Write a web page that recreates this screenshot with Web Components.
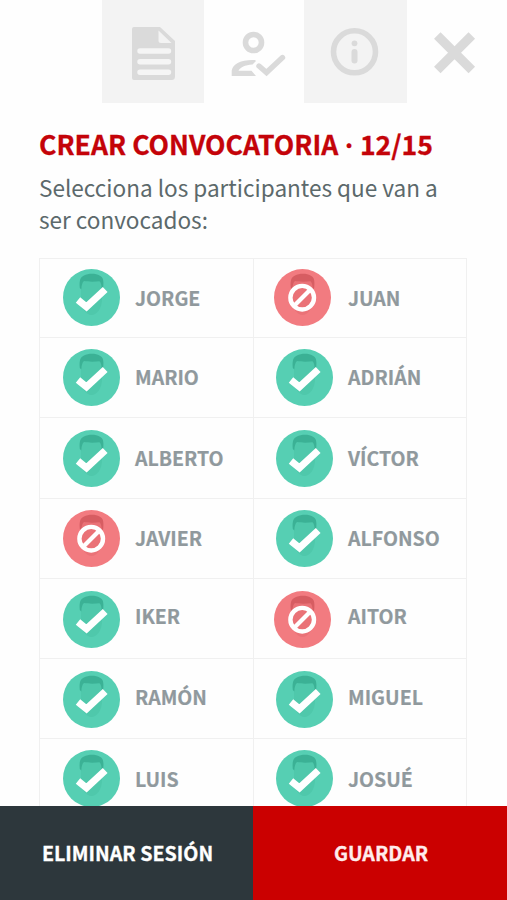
<!DOCTYPE html>
<html lang="es">
<head>
<meta charset="utf-8">
<title>Crear convocatoria</title>
<style>
  html, body {
    margin: 0;
    height: 100%;
    overflow: hidden;
  }
  body {
    background: #fefefe;
    font-family: "Noto Sans CJK SC", "Noto Sans CJK JP", sans-serif;
  }
  .dot {
    padding: 0 1px;
    font-family: "Open Sans", sans-serif;
  }
</style>
</head>
<body>
<session-screen>
  <tool-bar slot="tools">
    <tool-tab icon="doc" filled></tool-tab>
    <tool-tab icon="people"></tool-tab>
    <tool-tab icon="info" filled></tool-tab>
    <tool-tab icon="close"></tool-tab>
  </tool-bar>
  <session-heading>
    <span slot="title">CREAR CONVOCATORIA <span class="dot">·</span> 12/15</span>
    <span slot="text">Selecciona los participantes que van a<br>ser convocados:</span>
  </session-heading>
  <player-grid>
    <player-cell class="first">JORGE</player-cell>
    <player-cell class="first" state="out">JUAN</player-cell>
    <player-cell class="high">MARIO</player-cell>
    <player-cell class="high">ADRIÁN</player-cell>
    <player-cell>ALBERTO</player-cell>
    <player-cell>VÍCTOR</player-cell>
    <player-cell class="high" state="out">JAVIER</player-cell>
    <player-cell class="high">ALFONSO</player-cell>
    <player-cell class="raised">IKER</player-cell>
    <player-cell class="raised" state="out">AITOR</player-cell>
    <player-cell class="lowered">RAMÓN</player-cell>
    <player-cell class="lowered">MIGUEL</player-cell>
    <player-cell>LUIS</player-cell>
    <player-cell>JOSUÉ</player-cell>
  </player-grid>
  <action-button slot="actions" kind="dark">ELIMINAR SESIÓN</action-button>
  <action-button slot="actions" kind="primary">GUARDAR</action-button>
</session-screen>

<script>
  const icons = {
    doc: `
      <path fill-rule="evenodd" d="M32 27H58L73 41V76.500Q73 80 69.500 80H32Q30 80 30 78V29Q30 27 32 27ZM56.500 30.500V40.500Q56.500 43 59 43H69.500Z"/>
      <path class="line" d="M38 51H66.500M38 61.700H66.500M38 72.300H66.500"/>`,
    people: `
      <circle class="stroke" cx="49.500" cy="42.500" r="8" stroke-width="5.600"/>
      <path fill-rule="evenodd" d="M27.700 76V70.500C29 63 38.500 59.300 51 60L52 61L48.500 64.500C41 65 36 67.500 34.500 70.700H47.500L52 76Z"/>
      <path class="stroke" stroke-width="5.400" d="M55 66L62.500 72.500L78.500 57.500" stroke-linecap="round"/>`,
    info: `
      <circle class="stroke" cx="50.500" cy="51.800" r="21" stroke-width="5.600"/>
      <circle cx="50.500" cy="43.300" r="2.900"/>
      <path class="stroke" stroke-width="6" stroke-linecap="round" d="M50.500 52V60.500"/>`,
    close: `<path class="stroke" stroke-width="9.200" d="M30.300 35.500L64.800 70M64.800 35.500L30.300 70"/>`
  };

  const marks = {
    in: '<path d="M15 31L23.500 37.900L42.200 20.500" stroke-width="7"/>',
    out: '<circle cx="28.200" cy="28.700" r="11.800" stroke-width="4.400"/><path d="M20.200 36.700L36.200 20.700" stroke-width="4.200"/>'
  };

  class SessionScreen extends HTMLElement {
    constructor() {
      super();
      this.attachShadow({ mode: 'open' }).innerHTML = `
        <style>
          :host {
            display: flex;
            flex-direction: column;
            height: 100vh;
            overflow: hidden;
          }
          main {
            flex: 1;
            min-height: 0;
            overflow: hidden;
            padding: 0 40px 0 39px;
          }
          footer {
            display: grid;
            grid-template-columns: 253px 1fr;
            height: 94px;
            flex: none;
          }
        </style>
        <slot name="tools"></slot>
        <main><slot></slot></main>
        <footer><slot name="actions"></slot></footer>
      `;
    }
  }

  class ToolBar extends HTMLElement {
    constructor() {
      super();
      this.attachShadow({ mode: 'open' }).innerHTML = `
        <style>
          :host {
            display: grid;
            grid-template-columns: 102px 99.500px 103px 100.500px;
            justify-content: end;
            height: 103px;
            flex: none;
          }
        </style>
        <slot></slot>
      `;
    }
  }

  class ToolTab extends HTMLElement {
    constructor() {
      super();
      this.attachShadow({ mode: 'open' }).innerHTML = `
        <style>
          :host {
            display: block;
            color: #dadada;
          }
          :host([filled]) {
            background: #f3f3f3;
          }
          svg {
            display: block;
            width: 100px;
            height: 103px;
            fill: currentColor;
          }
          .stroke {
            fill: none;
            stroke: currentColor;
          }
          .line {
            fill: none;
            stroke: #f5f5f5;
            stroke-width: 5.4;
            stroke-linecap: round;
          }
        </style>
        <svg viewBox="0 0 100 103" aria-hidden="true">${icons[this.getAttribute('icon')]}</svg>
      `;
    }
  }

  class SessionHeading extends HTMLElement {
    constructor() {
      super();
      this.attachShadow({ mode: 'open' }).innerHTML = `
        <style>
          :host {
            display: block;
            height: 155px;
            white-space: nowrap;
          }
          h1 {
            margin: 0;
            padding-top: 25px;
            color: #c40309;
            font-size: 26.6px;
            font-weight: 700;
            line-height: 32px;
            -webkit-text-stroke: 0.3px;
          }
          p {
            margin: 0;
            padding-top: 11px;
            color: #5c696b;
            font-size: 22.55px;
            line-height: 31.5px;
          }
        </style>
        <h1><slot name="title"></slot></h1>
        <p><slot name="text"></slot></p>
      `;
    }
  }

  class PlayerGrid extends HTMLElement {
    constructor() {
      super();
      this.attachShadow({ mode: 'open' }).innerHTML = `
        <style>
          :host {
            display: grid;
            grid-template-columns: 214px 213px;
            grid-template-rows: 79px 80px 81px repeat(4, 80px);
            border-left: 1px solid #f0f0f0;
          }
          ::slotted(.first) {
            padding-bottom: 1px;
          }
          ::slotted(.high) {
            --name-shift: 2px;
          }
          ::slotted(.raised) {
            --name-shift: 6px;
            --avatar-shift: 1px;
          }
          ::slotted(.lowered) {
            --name-shift: 3px;
            --avatar-shift: 1px;
          }
        </style>
        <slot></slot>
      `;
    }
  }

  class PlayerCell extends HTMLElement {
    constructor() {
      super();
      const state = this.getAttribute('state') || 'in';
      this.attachShadow({ mode: 'open' }).innerHTML = `
        <style>
          :host {
            display: grid;
            grid-template-columns: 57px 1fr;
            column-gap: 15.500px;
            align-items: center;
            box-sizing: border-box;
            padding-left: 22.500px;
            border-top: 1px solid #f0f0f0;
            border-right: 1px solid #f0f0f0;
            --disc: #56cfb3;
            --hair: #3bb195;
            --face: #4fc8ab;
          }
          :host([state="out"]) {
            --disc: #f27b80;
            --hair: #d75d62;
            --face: #ea7277;
          }
          :host(:nth-child(even)) {
            padding-left: 22px;
            column-gap: 15px;
          }
          :host([state="out"]:nth-child(even)) {
            padding-left: 20px;
            column-gap: 17px;
          }
          svg {
            display: block;
            width: 57px;
            height: 57px;
            padding-top: var(--avatar-shift, 0);
          }
          .mark {
            fill: none;
            stroke: #fff;
          }
          span {
            padding-bottom: var(--name-shift, 0);
            color: #90999d;
            font-size: 19.5px;
            font-weight: 700;
            line-height: 24px;
            -webkit-text-stroke: 0.2px;
          }
        </style>
        <svg viewBox="0 0 57 57" aria-hidden="true">
          <circle cx="28.500" cy="28.500" r="28.500" fill="var(--disc)"/>
          <path fill="var(--face)" d="M18 12H39V30C39 39 34 46 28.500 46S18 39 18 30Z"/>
          <path fill="var(--hair)" d="M16.800 19C16 11 17.500 8 21 6.500C25 4 33 4 36.500 6.500C40 8 41 11 40.200 19L38.800 20.500C38.600 16 38 13.800 36.500 12.200C32 12.800 25 12.800 21 12C19.200 13.500 18.600 16 18.300 20.500Z"/>
          <g class="mark">${marks[state]}</g>
        </svg>
        <span><slot></slot></span>
      `;
    }
  }

  class ActionButton extends HTMLElement {
    constructor() {
      super();
      this.attachShadow({ mode: 'open' }).innerHTML = `
        <style>
          :host {
            display: grid;
          }
          button {
            border: 0;
            padding: 0 0 0 2px;
            background: #2d373c;
            color: #fff;
            font: 700 19.65px/24px "Noto Sans CJK SC", "Noto Sans CJK JP", sans-serif;
            -webkit-text-stroke: 0.3px;
          }
          :host([kind="primary"]) button {
            background: #cb0000;
            color: #ffecec;
          }
        </style>
        <button type="button"><slot></slot></button>
      `;
    }
  }

  customElements.define('session-screen', SessionScreen);
  customElements.define('tool-bar', ToolBar);
  customElements.define('tool-tab', ToolTab);
  customElements.define('session-heading', SessionHeading);
  customElements.define('player-grid', PlayerGrid);
  customElements.define('player-cell', PlayerCell);
  customElements.define('action-button', ActionButton);
</script>
</body>
</html>
